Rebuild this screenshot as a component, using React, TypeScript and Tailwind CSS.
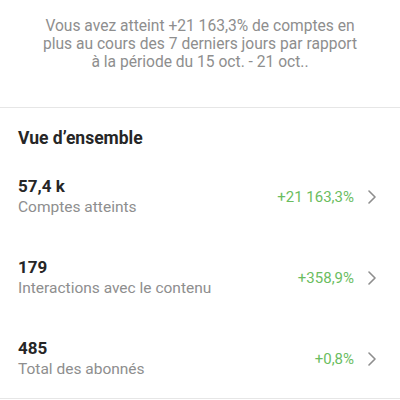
import React from "react";

const rows = [
  { value: "57,4 k", label: "Comptes atteints", delta: "+21 163,3%" },
  { value: "179", label: "Interactions avec le contenu", delta: "+358,9%" },
  { value: "485", label: "Total des abonnés", delta: "+0,8%" },
];

function Chevron() {
  return (
    <svg width="12" height="14" viewBox="0 0 12 14" fill="none" className="shrink-0">
      <path d="M3 1 L9 7 L3 13" stroke="#8e8e8e" strokeWidth="1.6" strokeLinecap="round" strokeLinejoin="round" />
    </svg>
  );
}

export default function App() {
  return (
    <div className="w-[400px] h-[400px] overflow-hidden bg-white" style={{ fontFamily: "Roboto, 'Liberation Sans', sans-serif" }}>
      <div className="pt-[17px] px-4 text-center text-[15.6px] leading-[18px] text-[#8e8e8e]">
        <p>Vous avez atteint +21 163,3% de comptes en</p>
        <p>plus au cours des 7 derniers jours par rapport</p>
        <p>à la période du 15 oct. - 21 oct..</p>
      </div>
      <div className="mt-[36px] h-px bg-[#e6e6e6]" />
      <div className="pl-[18px] pr-[22px]">
        <h2 className="mt-[20px] text-[17.5px] leading-[20px] font-bold text-[#262626]">Vue d’ensemble</h2>
        <div className="mt-[28px] flex flex-col gap-[39px]">
          {rows.map((r) => (
            <div key={r.value} className="flex items-center">
              <div className="flex-1">
                <div className="text-[17px] leading-[20px] font-bold text-[#262626]">{r.value}</div>
                <div className="text-[15.5px] leading-[22px] text-[#8e8e8e]">{r.label}</div>
              </div>
              <div className="text-[15px] text-[#6bbd5f] mr-[12px]">{r.delta}</div>
              <Chevron />
            </div>
          ))}
        </div>
      </div>
      <div className="mt-[18px] h-px bg-[#e6e6e6]" />
    </div>
  );
}
